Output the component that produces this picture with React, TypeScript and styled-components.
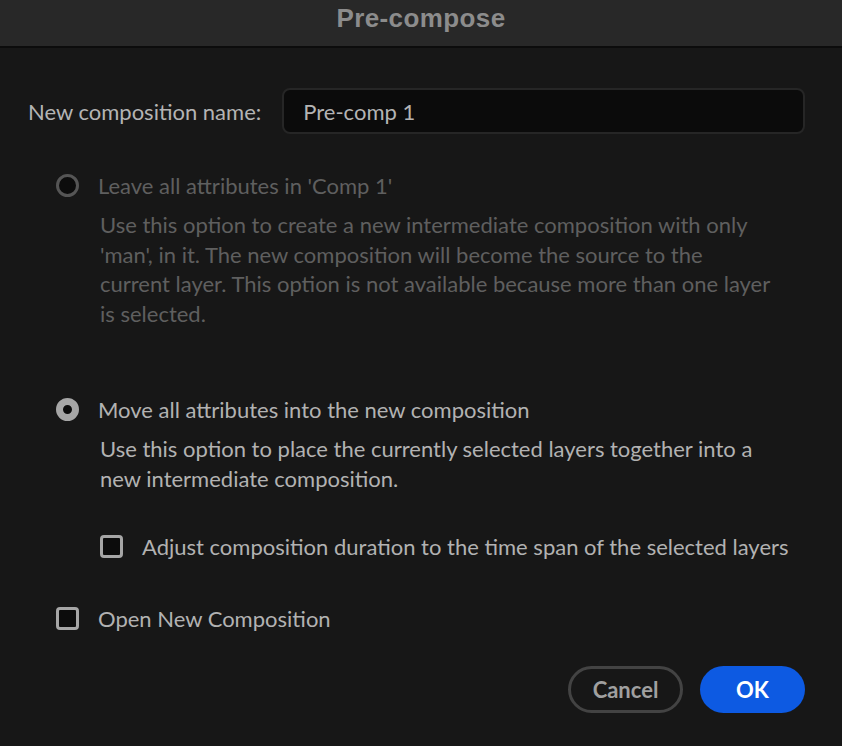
import React from "react";
import styled, { createGlobalStyle } from "styled-components";

const GlobalStyle = createGlobalStyle`
  html, body {
    margin: 0;
    padding: 0;
    background: #171717;
  }
  body {
    font-family: "Lato", "Noto Sans", sans-serif;
  }
`;

const DialogSt = styled.div`
  width: 842px;
  height: 746px;
  background: #171717;
  display: flex;
  flex-direction: column;
  overflow: hidden;
`;

const TitleBar = styled.div`
  height: 48px;
  flex-shrink: 0;
  background: #282828;
  border-bottom: 2px solid #0c0c0c;
  display: flex;
  justify-content: center;
  align-items: center;
  padding-bottom: 9px;
  box-sizing: border-box;
  h1 {
    margin: 0;
    font-family: "Liberation Sans", Arial, sans-serif;
    font-weight: 700;
    font-size: 26px;
    letter-spacing: 0.4px;
    color: #8c8c8c;
  }
`;

const Body = styled.div`
  flex: 1;
  display: flex;
  flex-direction: column;
  padding: 40px 37px 0 28px;
`;

const NameRow = styled.div`
  display: flex;
  align-items: center;
  gap: 21px;
  label {
    font-size: 22px;
    color: #b4b4b4;
  }
`;

const NameInput = styled.div`
  flex: 1;
  height: 46px;
  box-sizing: border-box;
  background: #0b0b0b;
  border: 2px solid #262626;
  border-radius: 8px;
  display: flex;
  align-items: center;
  padding-left: 19px;
  font-size: 22px;
  color: #b4b4b4;
`;

const Option = styled.div<{ $disabled?: boolean; $indent?: number; $top: number }>`
  display: flex;
  flex-direction: column;
  margin-top: ${(p) => p.$top}px;
  margin-left: ${(p) => p.$indent ?? 28}px;
  color: ${(p) => (p.$disabled ? "#5f5f5f" : "#b2b2b2")};
`;

const OptionHead = styled.div`
  display: flex;
  align-items: center;
  gap: 19px;
  height: 30px;
  font-size: 22px;
`;

const Radio = styled.span<{ $checked?: boolean; $disabled?: boolean }>`
  width: 23px;
  height: 23px;
  box-sizing: border-box;
  border-radius: 50%;
  flex-shrink: 0;
  background: #0c0c0c;
  border: ${(p) =>
    p.$checked ? "7.5px solid #a6a6a6" : `3px solid ${p.$disabled ? "#555555" : "#a6a6a6"}`};
`;

const Check = styled.span`
  width: 23px;
  height: 23px;
  box-sizing: border-box;
  border-radius: 4px;
  flex-shrink: 0;
  background: #0c0c0c;
  border: 3px solid #a6a6a6;
`;

const Description = styled.p`
  margin: 10px 0 0 44px;
  font-size: 22px;
  line-height: 29.5px;
  max-width: 690px;
`;

const Footer = styled.div`
  display: flex;
  justify-content: flex-end;
  gap: 17px;
  margin-top: 33px;
`;

const Button = styled.button<{ $primary?: boolean }>`
  height: 47px;
  border-radius: 24px;
  box-sizing: border-box;
  font-family: "Lato", "Noto Sans", sans-serif;
  font-weight: 700;
  font-size: 22px;
  cursor: pointer;
  padding: 0;
  width: ${(p) => (p.$primary ? "105px" : "115px")};
  background: ${(p) => (p.$primary ? "#0d5ae2" : "transparent")};
  color: ${(p) => (p.$primary ? "#ffffff" : "#a0a0a0")};
  border: ${(p) => (p.$primary ? "none" : "3px solid #434343")};
`;

export default function App() {
  return (
    <>
      <GlobalStyle />
      <DialogSt>
        <TitleBar>
          <h1>Pre-compose</h1>
        </TitleBar>
        <Body>
          <NameRow>
            <label>New composition name:</label>
            <NameInput>Pre-comp 1</NameInput>
          </NameRow>

          <Option $disabled $top={36}>
            <OptionHead>
              <Radio $disabled />
              <span>Leave all attributes in 'Comp 1'</span>
            </OptionHead>
            <Description>
              Use this option to create a new intermediate composition with only
              <br />
              'man', in it. The new composition will become the source to the
              <br />
              current layer. This option is not available because more than one layer
              <br />
              is selected.
            </Description>
          </Option>

          <Option $top={66}>
            <OptionHead>
              <Radio $checked />
              <span>Move all attributes into the new composition</span>
            </OptionHead>
            <Description>
              Use this option to place the currently selected layers together into a
              <br />
              new intermediate composition.
            </Description>
          </Option>

          <Option $indent={72} $top={38}>
            <OptionHead>
              <Check />
              <span>Adjust composition duration to the time span of the selected layers</span>
            </OptionHead>
          </Option>

          <Option $top={42}>
            <OptionHead>
              <Check />
              <span>Open New Composition</span>
            </OptionHead>
          </Option>

          <Footer>
            <Button>Cancel</Button>
            <Button $primary>OK</Button>
          </Footer>
        </Body>
      </DialogSt>
    </>
  );
}
